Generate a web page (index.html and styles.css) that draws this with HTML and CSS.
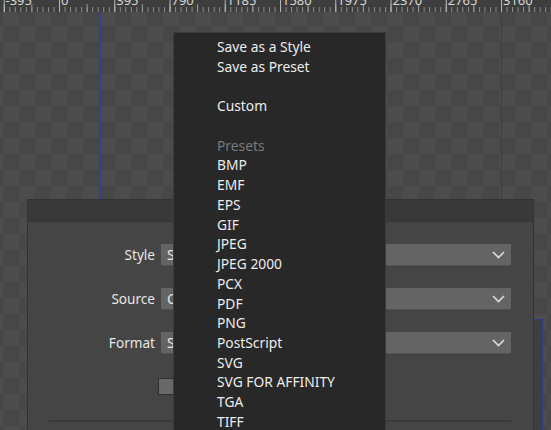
FILE: index.html
```html
<!DOCTYPE html>
<html>
<head>
<meta charset="utf-8">
<link rel="stylesheet" href="styles.css">
</head>
<body>
<div class="app">
  <svg class="ruler" width="551" height="12" viewBox="0 0 551 12">
    <defs>
      <pattern id="minor" patternUnits="userSpaceOnUse" x="3.75" y="0" width="5.525" height="12">
        <rect x="0" y="7" width="1" height="5" fill="#8c8c8c"/>
      </pattern>
      <pattern id="mid" patternUnits="userSpaceOnUse" x="3.75" y="0" width="27.625" height="12">
        <rect x="0" y="4" width="1" height="8" fill="#9a9a9a"/>
      </pattern>
      <pattern id="major" patternUnits="userSpaceOnUse" x="3.75" y="0" width="55.25" height="12">
        <rect x="0" y="0" width="1" height="12" fill="#b4b4b4"/>
      </pattern>
    </defs>
    <rect width="551" height="12" fill="#3e3e3e"/>
    <rect width="551" height="12" fill="url(#minor)"/>
    <rect width="551" height="12" fill="url(#mid)"/>
    <rect width="551" height="12" fill="url(#major)"/>
    <g class="ruler-labels">
      <text x="5.5" y="4.5">-395</text>
      <text x="61" y="4.5">0</text>
      <text x="116.25" y="4.5">395</text>
      <text x="171.5" y="4.5">790</text>
      <text x="226.75" y="4.5">1185</text>
      <text x="282" y="4.5">1580</text>
      <text x="337.25" y="4.5">1975</text>
      <text x="392.5" y="4.5">2370</text>
      <text x="447.75" y="4.5">2765</text>
      <text x="503" y="4.5">3160</text>
    </g>
  </svg>
  <div class="canvas">
    <div class="guide guide-a"></div>
    <div class="guide guide-b"></div>
    <div class="selection"></div>

    <div class="dialog">
      <div class="dialog-header"></div>
      <div class="dialog-body">
        <div class="form">
          <label class="field-label">Style</label>
          <div class="select"><span class="select-text">Single</span><svg class="chev" width="13" height="8" viewBox="0 0 13 8"><path d="M1 1 L6.5 6.5 L12 1" fill="none" stroke="#dcdcdc" stroke-width="1.6"/></svg></div>
          <label class="field-label">Source</label>
          <div class="select"><span class="select-text">Current</span><svg class="chev" width="13" height="8" viewBox="0 0 13 8"><path d="M1 1 L6.5 6.5 L12 1" fill="none" stroke="#dcdcdc" stroke-width="1.6"/></svg></div>
          <label class="field-label">Format</label>
          <div class="select"><span class="select-text">SVG</span><svg class="chev" width="13" height="8" viewBox="0 0 13 8"><path d="M1 1 L6.5 6.5 L12 1" fill="none" stroke="#dcdcdc" stroke-width="1.6"/></svg></div>
          <span></span>
          <div class="check-row"><span class="checkbox"></span></div>
        </div>
        <div class="separator"></div>
      </div>
    </div>

    <div class="menu">
      <div class="menu-item">Save as a Style</div>
      <div class="menu-item">Save as Preset</div>
      <div class="menu-item empty"></div>
      <div class="menu-item">Custom</div>
      <div class="menu-item empty"></div>
      <div class="menu-item heading">Presets</div>
      <div class="menu-item">BMP</div>
      <div class="menu-item">EMF</div>
      <div class="menu-item">EPS</div>
      <div class="menu-item">GIF</div>
      <div class="menu-item">JPEG</div>
      <div class="menu-item">JPEG 2000</div>
      <div class="menu-item">PCX</div>
      <div class="menu-item">PDF</div>
      <div class="menu-item">PNG</div>
      <div class="menu-item">PostScript</div>
      <div class="menu-item">SVG</div>
      <div class="menu-item">SVG FOR AFFINITY</div>
      <div class="menu-item">TGA</div>
      <div class="menu-item">TIFF</div>
    </div>
  </div>
</div>
</body>
</html>
```

FILE: styles.css
```css
html, body {
  margin: 0;
  padding: 0;
  width: 551px;
  height: 430px;
  overflow: hidden;
  background: #464646;
  font-family: "Noto Sans", "Open Sans", sans-serif;
}

.app {
  width: 551px;
  height: 430px;
  display: flex;
  flex-direction: column;
}

.ruler {
  display: block;
  flex: none;
}

.ruler-labels text {
  font-family: "Noto Sans", sans-serif;
  font-size: 13px;
  fill: #d6d6d6;
}

.canvas {
  position: relative;
  flex: 1;
  overflow: hidden;
  background-color: #474747;
  background-image: conic-gradient(#4c4c4c 25%, transparent 0 50%, #4c4c4c 0 75%, transparent 0);
  background-size: 32px 32px;
  background-position: 3px 14px;
}

.guide {
  position: absolute;
  top: 0;
  width: 1.3px;
  height: 200px;
  background: #323a8c;
}
.guide-a { left: 100px; }
.guide-b { left: 500.5px; }

.selection {
  position: absolute;
  left: 533px;
  top: 307px;
  width: 9px;
  height: 200px;
  border-top: 1px solid #323a8c;
  border-right: 1.3px solid #323a8c;
  background: #3f3f3f;
}

.dialog {
  position: absolute;
  left: 27px;
  top: 187px;
  width: 505px;
  height: 260px;
  border: 1px solid #333333;
  background: #454545;
}

.dialog-header {
  height: 21px;
  background: #393939;
  border-bottom: 1px solid #333333;
}

.dialog-body {
  padding-top: 22px;
}

.form {
  display: grid;
  grid-template-columns: 127px 350px;
  column-gap: 6px;
  row-gap: 22px;
  align-items: center;
}

.field-label {
  text-align: right;
  font-size: 13.6px;
  color: #e6e6e6;
  line-height: 22px;
}

.select {
  height: 21px;
  background: #646464;
  border-bottom: 1px solid #4f4f4f;
  display: flex;
  align-items: center;
  justify-content: space-between;
  padding: 0 6px 0 6px;
}

.select-text {
  font-size: 14px;
  color: #e6e6e6;
}

.chev {
  display: block;
}

.check-row {
  height: 22px;
  display: flex;
  align-items: flex-start;
  margin-top: 2px;
}

.checkbox {
  display: block;
  width: 15px;
  height: 15px;
  margin-left: -3px;
  background: #686868;
  border: 1px solid #2f2f2f;
}

.separator {
  margin: 20px 0 0 21px;
  width: 462px;
  height: 2px;
  background: #3a3a3a;
}

.menu {
  position: absolute;
  left: 173px;
  top: 20px;
  width: 211px;
  height: 420px;
  padding-top: 4px;
  background: #282828;
  border: 1px solid #3a3a3a;
}

.menu-item {
  height: 19.74px;
  line-height: 19.74px;
  padding-left: 43px;
  font-size: 13.8px;
  color: #ececec;
  white-space: nowrap;
}

.menu-item.heading {
  color: #7a7a7a;
}
```
